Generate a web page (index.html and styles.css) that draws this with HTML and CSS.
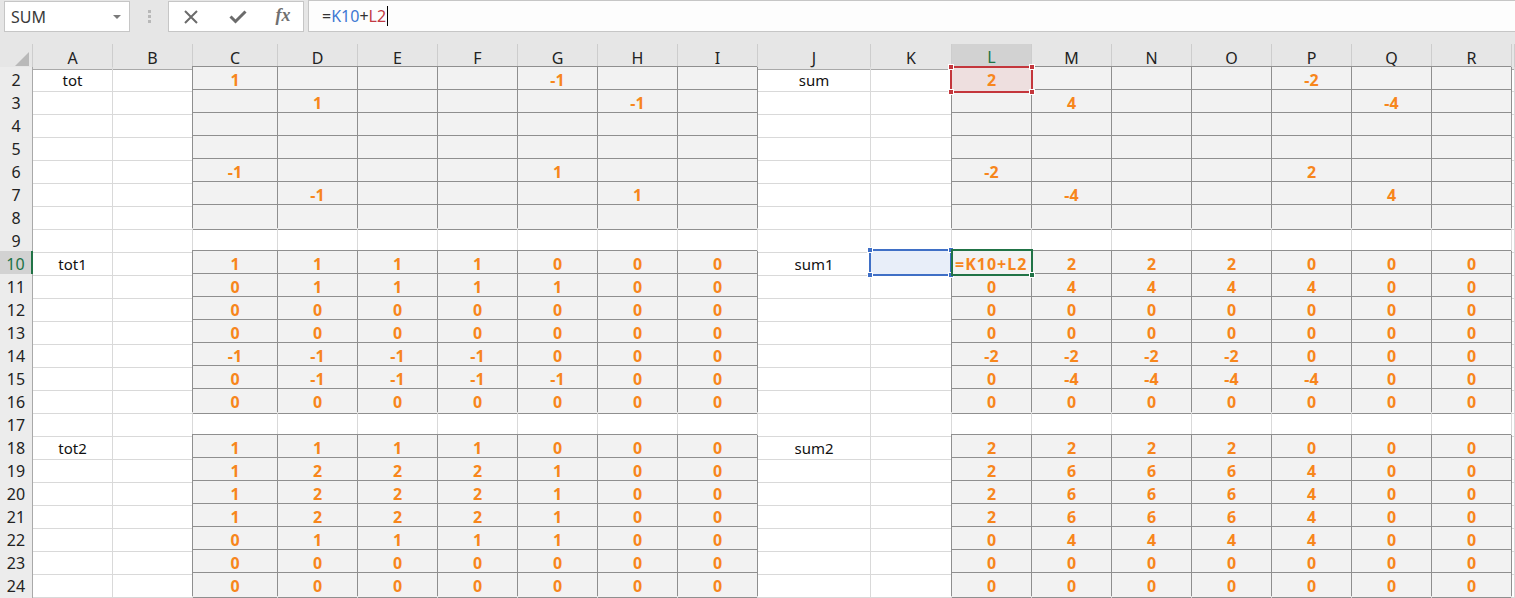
FILE: index.html
```html
<!DOCTYPE html>
<html lang="en">
<head>
<meta charset="utf-8">
<title>Sheet</title>
<link rel="stylesheet" href="styles.css">
</head>
<body>
<div class="fbar">
  <div class="namebox"><span>SUM</span><span class="caret"></span></div>
  <div class="grip"><i></i><i></i><i></i></div>
  <div class="btns">
    <span class="btn b1"><svg width="16" height="16" viewBox="0 0 16 16"><path d="M2 2L14 14M14 2L2 14" stroke="#6b6b6b" stroke-width="2" fill="none"/></svg></span>
    <span class="btn b2"><svg width="18" height="14" viewBox="0 0 18 14"><path d="M1.5 6.5L6.5 11.5L16.5 1.5" stroke="#6b6b6b" stroke-width="3" fill="none"/></svg></span>
    <span class="btn b3 fx">fx</span>
  </div>
  <div class="finput"><span>=</span><span class="ref-k">K10</span><span>+</span><span class="ref-l">L2</span><span class="cursor"></span></div>
</div>
<div class="gap"></div>
<div class="sheet">
  <div class="row hdr"><span class="corner"><i class="tri"></i></span><span>A</span><span>B</span><span>C</span><span>D</span><span>E</span><span>F</span><span>G</span><span>H</span><span>I</span><span>J</span><span>K</span><span class="hsel">L</span><span>M</span><span>N</span><span>O</span><span>P</span><span>Q</span><span>R</span><span></span></div>

  <div class="row"><span>2</span><span>tot</span><span></span><span class="s">1</span><span class="s"></span><span class="s"></span><span class="s"></span><span class="s">-1</span><span class="s"></span><span class="s"></span><span>sum</span><span></span><span class="s selr">2<em class="box red"><i class="h tl"></i><i class="h tr"></i><i class="h bl"></i><i class="h br"></i></em></span><span class="s"></span><span class="s"></span><span class="s"></span><span class="s">-2</span><span class="s"></span><span class="s"></span><span></span></div>

  <div class="row"><span>3</span><span></span><span></span><span class="s"></span><span class="s">1</span><span class="s"></span><span class="s"></span><span class="s"></span><span class="s">-1</span><span class="s"></span><span></span><span></span><span class="s"></span><span class="s">4</span><span class="s"></span><span class="s"></span><span class="s"></span><span class="s">-4</span><span class="s"></span><span></span></div>

  <div class="row"><span>4</span><span></span><span></span><span class="s"></span><span class="s"></span><span class="s"></span><span class="s"></span><span class="s"></span><span class="s"></span><span class="s"></span><span></span><span></span><span class="s"></span><span class="s"></span><span class="s"></span><span class="s"></span><span class="s"></span><span class="s"></span><span class="s"></span><span></span></div>

  <div class="row"><span>5</span><span></span><span></span><span class="s"></span><span class="s"></span><span class="s"></span><span class="s"></span><span class="s"></span><span class="s"></span><span class="s"></span><span></span><span></span><span class="s"></span><span class="s"></span><span class="s"></span><span class="s"></span><span class="s"></span><span class="s"></span><span class="s"></span><span></span></div>

  <div class="row"><span>6</span><span></span><span></span><span class="s">-1</span><span class="s"></span><span class="s"></span><span class="s"></span><span class="s">1</span><span class="s"></span><span class="s"></span><span></span><span></span><span class="s">-2</span><span class="s"></span><span class="s"></span><span class="s"></span><span class="s">2</span><span class="s"></span><span class="s"></span><span></span></div>

  <div class="row"><span>7</span><span></span><span></span><span class="s"></span><span class="s">-1</span><span class="s"></span><span class="s"></span><span class="s"></span><span class="s">1</span><span class="s"></span><span></span><span></span><span class="s"></span><span class="s">-4</span><span class="s"></span><span class="s"></span><span class="s"></span><span class="s">4</span><span class="s"></span><span></span></div>

  <div class="row"><span>8</span><span></span><span></span><span class="s"></span><span class="s"></span><span class="s"></span><span class="s"></span><span class="s"></span><span class="s"></span><span class="s"></span><span></span><span></span><span class="s"></span><span class="s"></span><span class="s"></span><span class="s"></span><span class="s"></span><span class="s"></span><span class="s"></span><span></span></div>

  <div class="row"><span>9</span><span></span><span></span><span></span><span></span><span></span><span></span><span></span><span></span><span></span><span></span><span></span><span></span><span></span><span></span><span></span><span></span><span></span><span></span><span></span></div>

  <div class="row"><span class="rsel">10</span><span>tot1</span><span></span><span class="s">1</span><span class="s">1</span><span class="s">1</span><span class="s">1</span><span class="s">0</span><span class="s">0</span><span class="s">0</span><span>sum1</span><span class="selk"><em class="box blue"><i class="h tl"></i><i class="h tr"></i><i class="h bl"></i><i class="h br"></i></em></span><span class="s lt">=K10+L2<em class="box green"><i class="h br"></i></em></span><span class="s">2</span><span class="s">2</span><span class="s">2</span><span class="s">0</span><span class="s">0</span><span class="s">0</span><span></span></div>

  <div class="row"><span>11</span><span></span><span></span><span class="s">0</span><span class="s">1</span><span class="s">1</span><span class="s">1</span><span class="s">1</span><span class="s">0</span><span class="s">0</span><span></span><span></span><span class="s">0</span><span class="s">4</span><span class="s">4</span><span class="s">4</span><span class="s">4</span><span class="s">0</span><span class="s">0</span><span></span></div>

  <div class="row"><span>12</span><span></span><span></span><span class="s">0</span><span class="s">0</span><span class="s">0</span><span class="s">0</span><span class="s">0</span><span class="s">0</span><span class="s">0</span><span></span><span></span><span class="s">0</span><span class="s">0</span><span class="s">0</span><span class="s">0</span><span class="s">0</span><span class="s">0</span><span class="s">0</span><span></span></div>

  <div class="row"><span>13</span><span></span><span></span><span class="s">0</span><span class="s">0</span><span class="s">0</span><span class="s">0</span><span class="s">0</span><span class="s">0</span><span class="s">0</span><span></span><span></span><span class="s">0</span><span class="s">0</span><span class="s">0</span><span class="s">0</span><span class="s">0</span><span class="s">0</span><span class="s">0</span><span></span></div>

  <div class="row"><span>14</span><span></span><span></span><span class="s">-1</span><span class="s">-1</span><span class="s">-1</span><span class="s">-1</span><span class="s">0</span><span class="s">0</span><span class="s">0</span><span></span><span></span><span class="s">-2</span><span class="s">-2</span><span class="s">-2</span><span class="s">-2</span><span class="s">0</span><span class="s">0</span><span class="s">0</span><span></span></div>

  <div class="row"><span>15</span><span></span><span></span><span class="s">0</span><span class="s">-1</span><span class="s">-1</span><span class="s">-1</span><span class="s">-1</span><span class="s">0</span><span class="s">0</span><span></span><span></span><span class="s">0</span><span class="s">-4</span><span class="s">-4</span><span class="s">-4</span><span class="s">-4</span><span class="s">0</span><span class="s">0</span><span></span></div>

  <div class="row"><span>16</span><span></span><span></span><span class="s">0</span><span class="s">0</span><span class="s">0</span><span class="s">0</span><span class="s">0</span><span class="s">0</span><span class="s">0</span><span></span><span></span><span class="s">0</span><span class="s">0</span><span class="s">0</span><span class="s">0</span><span class="s">0</span><span class="s">0</span><span class="s">0</span><span></span></div>

  <div class="row"><span>17</span><span></span><span></span><span></span><span></span><span></span><span></span><span></span><span></span><span></span><span></span><span></span><span></span><span></span><span></span><span></span><span></span><span></span><span></span><span></span></div>

  <div class="row"><span>18</span><span>tot2</span><span></span><span class="s">1</span><span class="s">1</span><span class="s">1</span><span class="s">1</span><span class="s">0</span><span class="s">0</span><span class="s">0</span><span>sum2</span><span></span><span class="s">2</span><span class="s">2</span><span class="s">2</span><span class="s">2</span><span class="s">0</span><span class="s">0</span><span class="s">0</span><span></span></div>

  <div class="row"><span>19</span><span></span><span></span><span class="s">1</span><span class="s">2</span><span class="s">2</span><span class="s">2</span><span class="s">1</span><span class="s">0</span><span class="s">0</span><span></span><span></span><span class="s">2</span><span class="s">6</span><span class="s">6</span><span class="s">6</span><span class="s">4</span><span class="s">0</span><span class="s">0</span><span></span></div>

  <div class="row"><span>20</span><span></span><span></span><span class="s">1</span><span class="s">2</span><span class="s">2</span><span class="s">2</span><span class="s">1</span><span class="s">0</span><span class="s">0</span><span></span><span></span><span class="s">2</span><span class="s">6</span><span class="s">6</span><span class="s">6</span><span class="s">4</span><span class="s">0</span><span class="s">0</span><span></span></div>

  <div class="row"><span>21</span><span></span><span></span><span class="s">1</span><span class="s">2</span><span class="s">2</span><span class="s">2</span><span class="s">1</span><span class="s">0</span><span class="s">0</span><span></span><span></span><span class="s">2</span><span class="s">6</span><span class="s">6</span><span class="s">6</span><span class="s">4</span><span class="s">0</span><span class="s">0</span><span></span></div>

  <div class="row"><span>22</span><span></span><span></span><span class="s">0</span><span class="s">1</span><span class="s">1</span><span class="s">1</span><span class="s">1</span><span class="s">0</span><span class="s">0</span><span></span><span></span><span class="s">0</span><span class="s">4</span><span class="s">4</span><span class="s">4</span><span class="s">4</span><span class="s">0</span><span class="s">0</span><span></span></div>

  <div class="row"><span>23</span><span></span><span></span><span class="s">0</span><span class="s">0</span><span class="s">0</span><span class="s">0</span><span class="s">0</span><span class="s">0</span><span class="s">0</span><span></span><span></span><span class="s">0</span><span class="s">0</span><span class="s">0</span><span class="s">0</span><span class="s">0</span><span class="s">0</span><span class="s">0</span><span></span></div>

  <div class="row"><span>24</span><span></span><span></span><span class="s">0</span><span class="s">0</span><span class="s">0</span><span class="s">0</span><span class="s">0</span><span class="s">0</span><span class="s">0</span><span></span><span></span><span class="s">0</span><span class="s">0</span><span class="s">0</span><span class="s">0</span><span class="s">0</span><span class="s">0</span><span class="s">0</span><span></span></div>

  <div class="row"><span></span><span></span><span></span><span></span><span></span><span></span><span></span><span></span><span></span><span></span><span></span><span></span><span></span><span></span><span></span><span></span><span></span><span></span><span></span><span></span></div>
</div>
</body>
</html>
```

FILE: styles.css
```css
* { box-sizing: border-box; }
html, body { margin: 0; padding: 0; }
body {
  width: 1515px;
  height: 598px;
  overflow: hidden;
  background: #ffffff;
  font-family: "Noto Sans", "Liberation Sans", sans-serif;
  color: #1a1a1a;
}

/* formula bar */
.fbar {
  display: flex;
  height: 32px;
  background: #e6e6e6;
}
.namebox {
  margin: 1px 0 0 4px;
  width: 126px;
  height: 31px;
  background: #ffffff;
  border: 1px solid #c6c6c6;
  display: flex;
  align-items: center;
  justify-content: space-between;
  padding: 0 8px 0 6px;
  font-size: 16px;
  color: #3a3a3a;
}
.caret {
  width: 0;
  height: 0;
  border-left: 4px solid transparent;
  border-right: 4px solid transparent;
  border-top: 4px solid #7a7a7a;
}
.grip {
  width: 38px;
  display: flex;
  flex-direction: column;
  align-items: center;
  justify-content: center;
  gap: 2px;
}
.grip i {
  display: block;
  width: 3px;
  height: 3px;
  background: #b8b8b8;
}
.btns {
  width: 136px;
  height: 31px;
  margin-top: 1px;
  background: #ffffff;
  border: 1px solid #c6c6c6;
  display: flex;
  align-items: center;
}
.btn {
  display: flex;
  align-items: center;
  justify-content: center;
}
.b1 { width: 44px; }
.b2 { width: 50px; }
.b3 { width: 40px; }
.fx {
  font-family: "Liberation Serif", serif;
  font-style: italic;
  font-weight: 700;
  font-size: 18px;
  color: #707070;
  padding-bottom: 2px;
}
.finput {
  flex: 1;
  margin-left: 4px;
  height: 32px;
  background: #fdfdfd;
  border: 1px solid #c6c6c6;
  border-right: none;
  display: flex;
  align-items: center;
  padding-left: 13px;
  font-size: 16px;
  color: #333333;
}
.ref-k { color: #3d78d3; }
.ref-l { color: #c23a44; }
.cursor {
  display: block;
  width: 1px;
  height: 20px;
  background: #000000;
  margin-left: 1px;
}
.gap {
  height: 12px;
  background: #e6e6e6;
}

/* grid */
.row {
  display: grid;
  grid-template-columns: 33px 80px 80px 85px repeat(6, 80px) 113px 81px repeat(7, 80px) 1fr;
  height: 23px;
}
.row > span {
  position: relative;
  display: flex;
  align-items: center;
  justify-content: center;
  padding-top: 2px;
  border-right: 1px solid #d9d9d9;
  border-bottom: 1px solid #d9d9d9;
  font-size: 15px;
  white-space: nowrap;
  color: #111111;
}
.row > span:first-child {
  background: #ececec;
  border-right-color: #a9a9a9;
  border-bottom-color: #cfcfcf;
  font-size: 16px;
  color: #222222;
}
.hdr > span {
  background: #e6e6e6;
  border-right-color: #cdcdcd;
  border-bottom-color: #a9a9a9;
  font-size: 16px;
  color: #222222;
}
.hdr > span.corner {
  background: #e6e6e6;
  border-right-color: #cdcdcd;
  border-bottom-color: #a9a9a9;
  justify-content: flex-end;
  align-items: flex-end;
  padding: 0 3px 3px 0;
}
.tri {
  display: block;
  width: 0;
  height: 0;
  border-left: 14px solid transparent;
  border-bottom: 14px solid #b9b9b9;
}
.hdr > span.hsel {
  background: #d2d2d2;
  color: #217346;
  border-bottom: 2px solid #217346;
}
.row > span.rsel {
  background: #d2d2d2;
  color: #217346;
  border-right: 2px solid #217346;
}

/* shaded blocks */
.row > .s {
  background: #f2f2f2;
  border-right-color: #8f8f8f;
  border-bottom-color: #8f8f8f;
  box-shadow: -1px -1px 0 #8f8f8f;
  color: #f7861c;
  font-weight: 700;
  font-size: 16px;
}
.row > .lt {
  justify-content: flex-start;
  padding-left: 3px;
  letter-spacing: 1px;
  z-index: 3;
}
.row > .selr { background: #eedfdf; z-index: 2; }
.row > .selk { background: #e8eef9; z-index: 2; }

/* selection boxes */
.box {
  position: absolute;
  border: 2px solid;
  pointer-events: none;
}
.box.red {
  border-color: #c4363c;
  inset: -1px -2px -2px -2px;
}
.box.blue {
  border-color: #3f6fc6;
  inset: -2px -1px -1px -2px;
}
.box.green {
  border-color: #217346;
  inset: -2px -2px -1px -1px;
}
.h {
  position: absolute;
  width: 6px;
  height: 6px;
  border: 1px solid #ffffff;
}
.red .h { background: #c4363c; }
.blue .h { background: #3f6fc6; }
.green .h { background: #217346; }
.h.tl { left: -4px; top: -4px; }
.h.tr { right: -4px; top: -4px; }
.h.bl { left: -4px; bottom: -4px; }
.h.br { right: -4px; bottom: -4px; }
```
